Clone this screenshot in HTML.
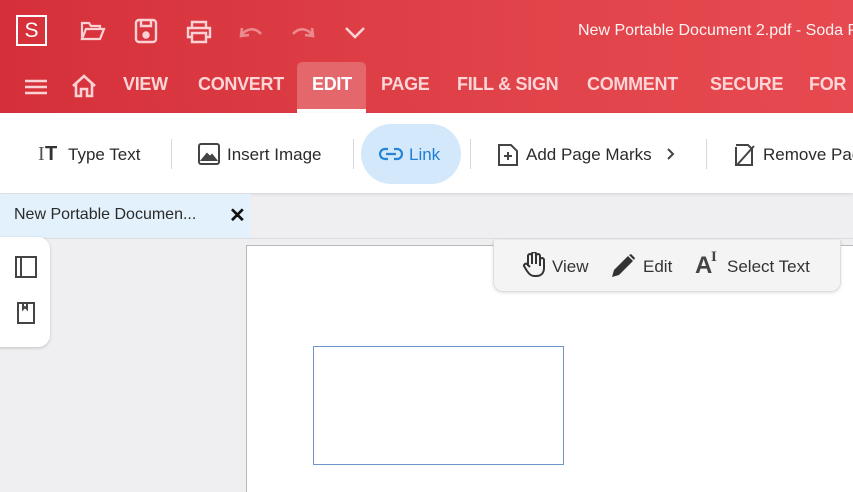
<html style="overflow:hidden"><head><style>
html,body{margin:0;width:853px;height:492px;overflow:hidden}
body{font-family:"Liberation Sans",sans-serif;background:#efeef0;position:relative}
.a{position:absolute}
.hdr{left:0;top:0;width:853px;height:113px;background:linear-gradient(90deg,#d5303a,#e1434a 60%,#e6494f)}
.nav{color:#fdd5d6;font-size:18px;font-weight:bold;top:74px;letter-spacing:-0.3px}
.tb{font-size:17px;color:#2b2b2b;top:145px}
.sep{width:1px;height:30px;background:#d8d8d8;top:139px}
svg{position:absolute}
</style></head><body>
<div class="a hdr"></div>
<div class="a" style="left:16px;top:15px;width:31px;height:31px;border:2px solid #fff;box-sizing:border-box;color:#fff;font-size:21px;text-align:center;line-height:28px">S</div>
<svg style="left:80px;top:20px" width="26" height="22" viewBox="0 0 26 22" fill="none" stroke="#fbd1d3" stroke-width="2.2"><path d="M2 19V3h7l2 3h9v3M2 19l4-10h18l-4 10z"/></svg>
<svg style="left:134px;top:18px" width="24" height="26" viewBox="0 0 24 26" fill="none" stroke="#fbd1d3" stroke-width="2.4"><rect x="2" y="2" width="20" height="22" rx="3"/><path d="M7 2v6h10V2"/><circle cx="12" cy="17" r="2.5" fill="#fbd1d3"/></svg>
<svg style="left:186px;top:20px" width="26" height="24" viewBox="0 0 26 24" fill="none" stroke="#fbd1d3" stroke-width="2.4"><path d="M6 8V2h14v6M6 17H2V8h22v9h-4M6 13h14v9H6z"/></svg>
<svg style="left:238px;top:24px" width="26" height="14" viewBox="0 0 26 14" fill="none" stroke="#ea8a8e" stroke-width="2.6"><path d="M4 4l-1 8 8-1M3 12c5-8 14-9 20-2"/></svg>
<svg style="left:290px;top:24px" width="26" height="14" viewBox="0 0 26 14" fill="none" stroke="#ea8a8e" stroke-width="2.6"><path d="M22 4l1 8-8-1M23 12C18 4 9 3 3 10"/></svg>
<svg style="left:344px;top:25px" width="22" height="14" viewBox="0 0 22 14" fill="none" stroke="#fbd1d3" stroke-width="2.6"><path d="M2 3l9 9 9-9"/></svg>
<div class="a" style="left:578px;top:22px;color:#fff3f3;font-size:16px;white-space:nowrap">New Portable Document 2.pdf - Soda P</div>
<svg style="left:24px;top:78px" width="24" height="18" viewBox="0 0 24 18" stroke="#fbd1d3" stroke-width="2.6"><path d="M1 3h22M1 9h22M1 15h22"/></svg>
<svg style="left:71px;top:74px" width="26" height="24" viewBox="0 0 26 24" fill="none" stroke="#fbd1d3" stroke-width="2.6"><path d="M2 12L13 2l11 10M5 10v12h5v-7h6v7h5V10"/></svg>
<div class="a" style="left:297px;top:62px;width:69px;height:48px;background:#e4676c;border-radius:5px 5px 0 0"></div>
<div class="a" style="left:297px;top:109px;width:69px;height:4px;background:#fff"></div>
<div class="a nav" style="left:123px">VIEW</div>
<div class="a nav" style="left:198px">CONVERT</div>
<div class="a nav" style="left:312px;color:#fff">EDIT</div>
<div class="a nav" style="left:381px">PAGE</div>
<div class="a nav" style="left:457px">FILL &amp; SIGN</div>
<div class="a nav" style="left:587px">COMMENT</div>
<div class="a nav" style="left:710px">SECURE</div>
<div class="a nav" style="left:809px">FOR</div>
<div class="a" style="left:0;top:113px;width:853px;height:80px;background:#fff;box-shadow:0 1px 3px rgba(0,0,0,.12)"></div>
<div class="a" style="left:361px;top:124px;width:100px;height:60px;background:#d3e9fb;border-radius:30px"></div>
<div class="a" style="left:38px;top:143px;font-size:20px;color:#555;font-family:'Liberation Serif',serif">I</div>
<div class="a" style="left:45px;top:143px;font-size:20px;font-weight:bold;color:#333">T</div>
<div class="a tb" style="left:68px">Type Text</div>
<div class="a sep" style="left:171px"></div>
<svg style="left:198px;top:143px" width="22" height="22" viewBox="0 0 22 22" fill="none" stroke="#444" stroke-width="2"><rect x="1" y="1" width="20" height="20" rx="2"/><path d="M4 17l5-6 3 3 2-2 4 5z" fill="#444"/></svg>
<div class="a tb" style="left:227px">Insert Image</div>
<div class="a sep" style="left:353px"></div>
<svg style="left:379px;top:147px" width="24" height="14" viewBox="0 0 24 14" fill="none" stroke="#2384d8" stroke-width="2.2"><path d="M9 2H6a5 5 0 000 10h3M15 2h3a5 5 0 010 10h-3M7 7h10"/></svg>
<div class="a tb" style="left:409px;color:#1e7fd5">Link</div>
<div class="a sep" style="left:470px"></div>
<svg style="left:497px;top:143px" width="22" height="24" viewBox="0 0 22 24" fill="none" stroke="#444" stroke-width="2"><path d="M2 2h12l6 6v14H2z"/><path d="M11 9v8M7 13h8"/></svg>
<div class="a tb" style="left:526px">Add Page Marks</div>
<svg style="left:666px;top:147px" width="10" height="14" viewBox="0 0 10 14" fill="none" stroke="#444" stroke-width="2"><path d="M2 2l5 5-5 5"/></svg>
<div class="a sep" style="left:706px"></div>
<svg style="left:734px;top:143px" width="22" height="24" viewBox="0 0 22 24" fill="none" stroke="#444" stroke-width="2"><path d="M2 4v18h16V6l-4-4H2M3 22L20 3"/></svg>
<div class="a tb" style="left:763px;white-space:nowrap">Remove Pages</div>
<div class="a" style="left:0;top:194px;width:250px;height:44px;background:#e3f1fc"></div>
<div class="a" style="left:14px;top:206px;font-size:16px;color:#2b2b2b">New Portable Documen...</div>
<div class="a" style="left:229px;top:203px;font-size:20px;font-weight:bold;color:#111">✕</div>
<div class="a" style="left:0;top:238px;width:853px;height:1px;background:#dcdcdc"></div>
<div class="a" style="left:246px;top:245px;width:620px;height:247px;background:#fff;border-left:1px solid #b8b8b8;border-top:1px solid #b8b8b8"></div>
<div class="a" style="left:313px;top:346px;width:249px;height:117px;border:1px solid #6f94c8"></div>
<div class="a" style="left:-2px;top:237px;width:52px;height:110px;background:#fff;border-radius:0 12px 12px 0;box-shadow:0 1px 3px rgba(0,0,0,.18)"></div>
<svg style="left:15px;top:256px" width="22" height="22" viewBox="0 0 22 22" fill="none" stroke="#444" stroke-width="2"><rect x="1" y="1" width="20" height="20"/><path d="M6 1v20"/></svg>
<svg style="left:17px;top:302px" width="18" height="22" viewBox="0 0 18 22" fill="none" stroke="#444" stroke-width="2"><rect x="1" y="1" width="16" height="20"/><path d="M6 1v6l2-2 2 2V1"/></svg>
<div class="a" style="left:493px;top:240px;width:346px;height:51px;background:#f4f4f4;border-radius:0 0 10px 10px;border:1px solid #dedede;border-top:none;box-shadow:0 1px 3px rgba(0,0,0,.12)"></div>
<svg style="left:522px;top:252px" width="24" height="26" viewBox="0 0 24 26" fill="none" stroke="#333" stroke-width="2"><path d="M6 14V4a2 2 0 014 0v8V2a2 2 0 014 0v10V4a2 2 0 014 0v10V8a2 2 0 014 0v8c0 5-3 8-8 8h-2c-3 0-5-2-7-5l-3-5a2 2 0 013-2l3 3"/></svg>
<div class="a" style="left:552px;top:257px;font-size:17px;color:#333">View</div>
<svg style="left:610px;top:253px" width="26" height="26" viewBox="0 0 26 26" fill="#333"><path d="M2 24l2-7L18 3l5 5L9 22z M19 2l2-1 4 4-1 2z"/></svg>
<div class="a" style="left:643px;top:257px;font-size:17px;color:#333">Edit</div>
<div class="a" style="left:695px;top:252px;font-size:24px;font-weight:bold;color:#444">A</div>
<div class="a" style="left:711px;top:249px;font-size:15px;color:#444;font-weight:bold;font-family:'Liberation Serif',serif">I</div>
<div class="a" style="left:727px;top:257px;font-size:17px;color:#333">Select Text</div>
</body></html>
